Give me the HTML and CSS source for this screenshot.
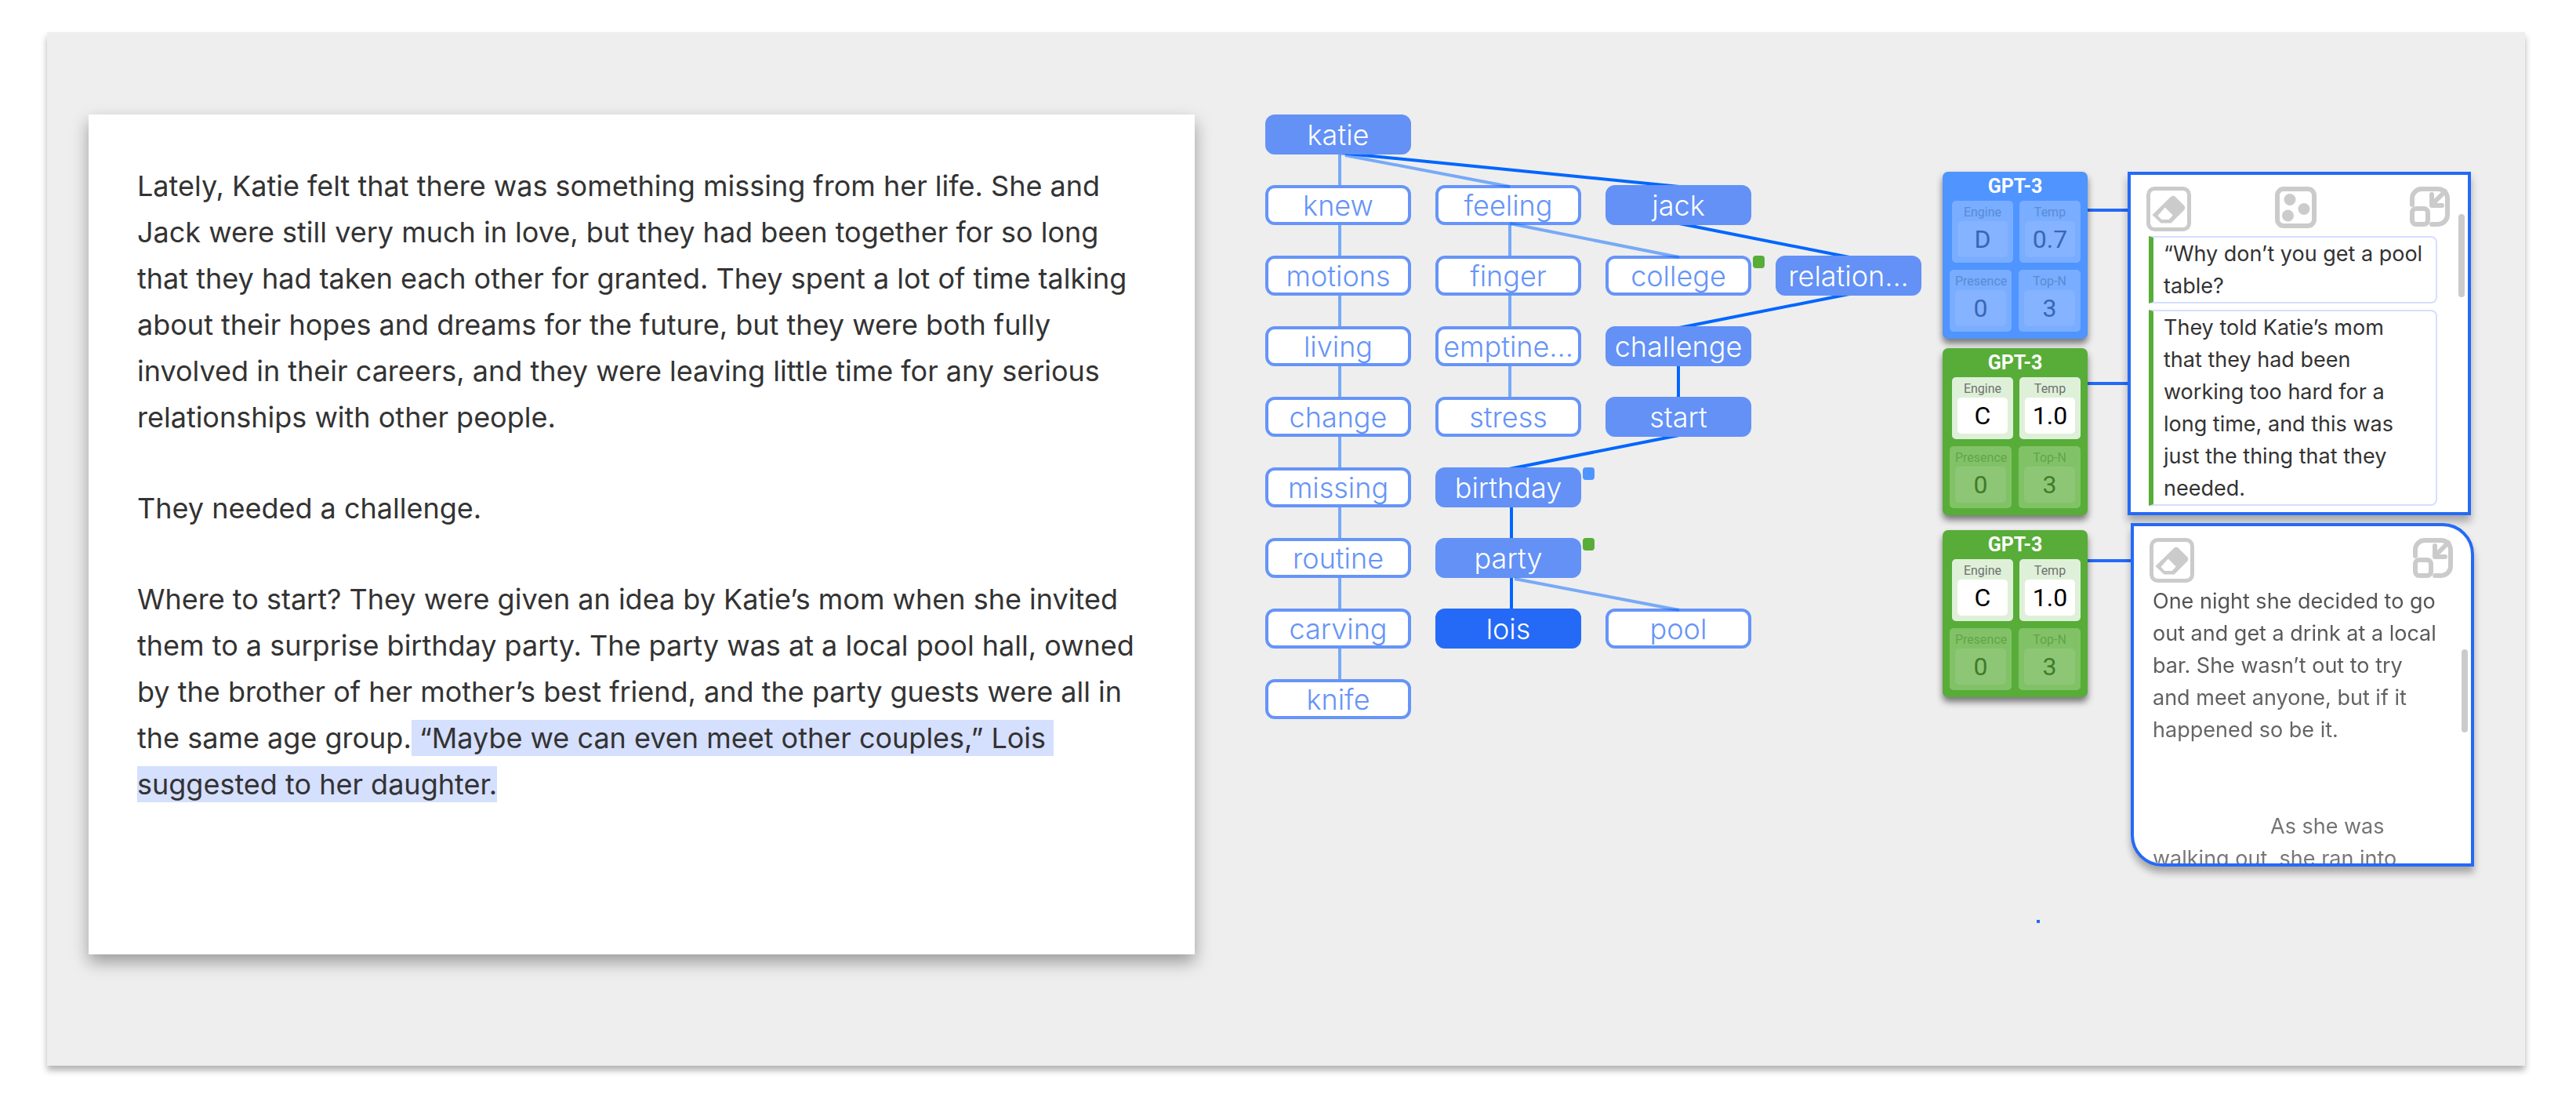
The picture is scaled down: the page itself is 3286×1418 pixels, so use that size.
FILE: index.html
```html
<!DOCTYPE html>
<html lang="en">
<head>
<meta charset="utf-8">
<meta name="viewport" content="width=device-width, initial-scale=1">
<title>Story editor</title>
<link rel="stylesheet" href="styles.css">
</head>
<body>
<svg class="defs" aria-hidden="true">
  <symbol id="icon-eraser" viewBox="0 0 57 57">
    <rect x="2.5" y="2.5" width="52" height="52" rx="8" fill="none" stroke="currentColor" stroke-width="5"/>
    <path d="M31 13 Q34 10.500 37 13 L48 24 Q50.500 27 48 30 L31.500 46.500 L18.500 46.500 L7.500 36 Z M23.700 26.500 L14.500 37 L19.300 42 L28.700 42 L33.700 36.500 Z" fill="currentColor" fill-rule="evenodd"/>
  </symbol>
  <symbol id="icon-dice" viewBox="0 0 53 53">
    <rect x="3" y="3" width="47" height="47" rx="8" fill="none" stroke="currentColor" stroke-width="6"/>
    <circle cx="19" cy="16.500" r="7.500" fill="currentColor"/>
    <circle cx="37" cy="28.500" r="7.500" fill="currentColor"/>
    <circle cx="16.500" cy="37" r="7.500" fill="currentColor"/>
  </symbol>
  <symbol id="icon-collapse" viewBox="0 0 51 51">
    <g fill="none" stroke="currentColor" stroke-width="6" stroke-linecap="round" stroke-linejoin="round">
      <path d="M3 23 V15 A12 12 0 0 1 15 3 H36 A12 12 0 0 1 48 15 V36 A12 12 0 0 1 36 48 H28"/>
      <rect x="3" y="28" width="20" height="20" rx="5"/>
      <path d="M45 6 L29 22 M28 10 V24 H41"/>
    </g>
  </symbol>
</svg>

<main class="app">
  <article class="document">
    <p>Lately, Katie felt that there was something missing from her life. She and<br>Jack were still very much in love, but they had been together for so long<br>that they had taken each other for granted. They spent a lot of time talking<br>about their hopes and dreams for the future, but they were both fully<br>involved in their careers, and they were leaving little time for any serious<br>relationships with other people.</p>
    <p>They needed a challenge.</p>
    <p>Where to start? They were given an idea by Katie’s mom when she invited<br>them to a surprise birthday party. The party was at a local pool hall, owned<br>by the brother of her mother’s best friend, and the party guests were all in<br>the same age group.<mark> “Maybe we can even meet other couples,” Lois&nbsp;<br>suggested to her daughter.</mark></p>
  </article>

  <section class="tree" aria-label="Word tree">
    <svg class="tree-lines" width="837" height="771" aria-hidden="true">
      <path class="branch" d="M95 51V720 M312 140V360"/>
      <path class="branch active" d="M95 49L528 92 M528 139L745 182 M745 229L528 272 M527 320V362 M528 409L311 452 M314 500V542 M314 590V632"/>
    </svg>
    <button class="node c1 r1 on">katie</button>
    <button class="node c1 r2">knew</button>
    <button class="node c2 r2">feeling</button>
    <button class="node c3 r2 on">jack</button>
    <button class="node c1 r3">motions</button>
    <button class="node c2 r3">finger</button>
    <button class="node c3 r3">college<span class="tag green"></span></button>
    <button class="node c4 r3 on">relation...</button>
    <button class="node c1 r4">living</button>
    <button class="node c2 r4">emptine...</button>
    <button class="node c3 r4 on">challenge</button>
    <button class="node c1 r5">change</button>
    <button class="node c2 r5">stress</button>
    <button class="node c3 r5 on">start</button>
    <button class="node c1 r6">missing</button>
    <button class="node c2 r6 on">birthday<span class="tag blue"></span></button>
    <button class="node c1 r7">routine</button>
    <button class="node c2 r7 on">party<span class="tag green"></span></button>
    <button class="node c1 r8">carving</button>
    <button class="node c2 r8 current">lois</button>
    <button class="node c3 r8">pool</button>
    <button class="node c1 r9">knife</button>
    <svg class="tree-lines" width="837" height="771" aria-hidden="true">
      <path class="branch" d="M102 52L312 92 M312 139L528 182 M318 592L528 632"/>
    </svg>
  </section>

  <section class="models" aria-label="Models">
    <div class="model blue">
      <h2>GPT-3</h2>
      <div class="row first">
        <label class="param off">Engine<input value="D" disabled></label>
        <label class="param off">Temp<input value="0.7" disabled></label>
      </div>
      <div class="row">
        <label class="param off">Presence<input value="0" disabled></label>
        <label class="param off">Top-N<input value="3" disabled></label>
      </div>
    </div>
    <div class="model green">
      <h2>GPT-3</h2>
      <div class="row first">
        <label class="param">Engine<input value="C"></label>
        <label class="param">Temp<input value="1.0"></label>
      </div>
      <div class="row">
        <label class="param off">Presence<input value="0" disabled></label>
        <label class="param off">Top-N<input value="3" disabled></label>
      </div>
    </div>
    <div class="model green apart">
      <h2>GPT-3</h2>
      <div class="row first">
        <label class="param">Engine<input value="C"></label>
        <label class="param">Temp<input value="1.0"></label>
      </div>
      <div class="row">
        <label class="param off">Presence<input value="0" disabled></label>
        <label class="param off">Top-N<input value="3" disabled></label>
      </div>
    </div>
    <span class="handle"></span>
  </section>

  <svg class="links" width="51" height="670" aria-hidden="true">
    <path d="M0 49H51 M0 270H51 M0 496H55"/>
  </svg>

  <section class="panels" aria-label="Generated text">
    <div class="panel">
      <div class="tools">
        <button aria-label="Erase"><svg width="57" height="57"><use href="#icon-eraser"/></svg></button>
        <button aria-label="Shuffle"><svg width="53" height="53"><use href="#icon-dice"/></svg></button>
        <button class="end" aria-label="Collapse"><svg width="51" height="51"><use href="#icon-collapse"/></svg></button>
      </div>
      <ul class="results">
        <li>“Why don’t you get a pool<br>table?</li>
        <li>They told Katie’s mom<br>that they had been<br>working too hard for a<br>long time, and this was<br>just the thing that they<br>needed.</li>
      </ul>
      <span class="thumb high"></span>
    </div>
    <div class="panel rounded">
      <div class="tools">
        <button aria-label="Erase"><svg width="57" height="57"><use href="#icon-eraser"/></svg></button>
        <button class="end" aria-label="Collapse"><svg width="51" height="51"><use href="#icon-collapse"/></svg></button>
      </div>
      <div class="draft">
        <p>One night she decided to go<br>out and get a drink at a local<br>bar. She wasn’t out to try<br>and meet anyone, but if it<br>happened so be it.</p>
        <p class="indent">As she was<br>walking out, she ran into</p>
      </div>
      <span class="thumb mid"></span>
    </div>
  </section>
</main>
</body>
</html>
```
FILE: styles.css
```css
* { box-sizing: border-box; }

body {
  margin: 0;
  padding: 41px 65px 59px 60px;
  background: #fff;
  font-family: Inter, "Liberation Sans", sans-serif;
  color: #333;
}

button, input { font: inherit; color: inherit; }

.defs { position: absolute; width: 0; height: 0; }

.app {
  display: grid;
  grid-template-columns: minmax(0, 1fr) 954px 185px 51px 442px;
  align-items: start;
  padding: 105px 65px 142px 53px;
  background: #eee;
  box-shadow: 0 6px 8px rgba(0, 0, 0, 0.3);
}

/* Document */
.document {
  min-height: 1071px;
  padding: 62px 62px;
  background: #fff;
  box-shadow: 0 10px 20px rgba(0, 0, 0, 0.35);
  font-size: 36px;
  line-height: 59px;
  white-space: nowrap;
}
.document p { margin: 0 0 57px; }
.document mark { padding: 1px 0; background: #d5dffe; color: inherit; }

/* Word tree */
.tree {
  position: relative;
  display: grid;
  grid-template-columns: repeat(4, 186px);
  grid-template-rows: repeat(9, 51px);
  gap: 39px 31px;
  margin: 0 27px 0 90px;
}
.tree-lines { position: absolute; top: 0; left: 0; pointer-events: none; }
.branch { fill: none; stroke: #0066ff; stroke-opacity: 0.5; stroke-width: 4; }
.branch.active { stroke-opacity: 1; }
.node {
  position: relative;
  padding: 2px 0 0;
  border: 4px solid #6694f8;
  border-radius: 12px;
  background: #fff;
  color: #6694f8;
  font-size: 36px;
  font-weight: 300;
  line-height: 41px;
  text-align: center;
}
.node.on { background: #6391f6; border-color: #6391f6; color: #fff; }
.node.current { background: #246af7; border-color: #246af7; color: #fff; }
.c1 { grid-column: 1; } .c2 { grid-column: 2; } .c3 { grid-column: 3; } .c4 { grid-column: 4; }
.r1 { grid-row: 1; } .r2 { grid-row: 2; } .r3 { grid-row: 3; } .r4 { grid-row: 4; } .r5 { grid-row: 5; }
.r6 { grid-row: 6; } .r7 { grid-row: 7; } .r8 { grid-row: 8; } .r9 { grid-row: 9; }
.tag {
  position: absolute;
  top: -4px;
  right: -21px;
  width: 15px;
  height: 16px;
  border-radius: 4px;
}
.tag.green { background: #57ad38; }
.tag.blue { background: #4f95ff; }

/* Model cards */
.models {
  position: relative;
  margin-top: 73px;
  display: flex;
  flex-direction: column;
  gap: 12px;
}
.model {
  display: flex;
  flex-direction: column;
  gap: 9px;
  padding-bottom: 9px;
  border-radius: 7px;
  box-shadow: 0 6px 8px rgba(0, 0, 0, 0.5);
  font-family: Roboto, sans-serif;
  font-weight: 400;
}
.model.apart { margin-top: 7px; }
.model h2 {
  margin: 0 0 -9px;
  padding-top: 1px;
  color: #fff;
  font-size: 25px;
  line-height: 36px;
  text-align: center;
}
.model .row { display: flex; gap: 9px; padding: 0 9px; }
.model .row.first { gap: 8px; padding-left: 12px; }
.param {
  flex: 1;
  min-width: 0;
  padding: 4px 7px 7px;
  border-radius: 5px;
  font-size: 16px;
  line-height: 22px;
  text-align: center;
}
.param input {
  display: block;
  width: 100%;
  height: 46px;
  padding: 0;
  border: 0;
  border-radius: 5px;
  background: #fff;
  color: #000;
  font-size: 32px;
  font-weight: 400;
  text-align: center;
}
.model.blue { background: #4f94ff; }
.model.green { background: #57ad38; }
.green .param { background: #dff0d9; color: #707070; }
.green .param.off { background: #82c267; color: #64a34b; }
.green .off input { background: #8dc776; color: #427b2c; }
.blue .param.off { background: #79adff; color: #5a8bd4; }
.blue .off input { background: #85b3ff; color: #3767b5; }
.handle {
  position: absolute;
  top: 954px;
  left: 120px;
  width: 4px;
  height: 4px;
  background: #246af7;
}

.links { margin-top: 73px; overflow: visible; }
.links path { stroke: #246af7; stroke-width: 4; }

/* Text panels */
.panels {
  position: relative;
  margin-top: 73px;
  display: flex;
  flex-direction: column;
  align-items: flex-start;
  gap: 10px;
}
.panel {
  position: relative;
  width: 438px;
  height: 438px;
  padding: 15px 23px 0 20px;
  border: 4px solid #246af7;
  background: #fff;
  box-shadow: 0 8px 10px rgba(0, 0, 0, 0.3);
  font-size: 27px;
  line-height: 41px;
  white-space: nowrap;
  overflow: hidden;
}
.panel.rounded { margin-left: 4px; border-radius: 0 40px 0 40px; }
.tools { display: flex; align-items: flex-start; gap: 107px; color: #cbcbcb; }
.tools button { padding: 0; border: 0; background: none; color: inherit; }
.tools svg { display: block; }
.tools .end { margin-left: auto; }
.results {
  display: flex;
  flex-direction: column;
  gap: 8px;
  width: 368px;
  margin: 6px 0 0 3px;
  padding: 0;
  list-style: none;
}
.results li {
  padding-left: 13px;
  border: 2px solid #d5dffe;
  border-left: 6px solid #57ad38;
  border-radius: 0 8px 8px 0;
}
.draft {
  margin: 3px 0 0 4px;
  -webkit-mask-image: linear-gradient(rgba(0, 0, 0, 0.85), rgba(0, 0, 0, 0.65));
  mask-image: linear-gradient(rgba(0, 0, 0, 0.85), rgba(0, 0, 0, 0.65));
}
.draft p { margin: 0 0 82px; }
.draft .indent { margin: 0; text-indent: 150px; }
.thumb { position: absolute; right: 4px; width: 8px; height: 106px; border-radius: 4px; background: #cbcbcb; }
.thumb.high { top: 50px; }
.thumb.mid { top: 157px; }
```
